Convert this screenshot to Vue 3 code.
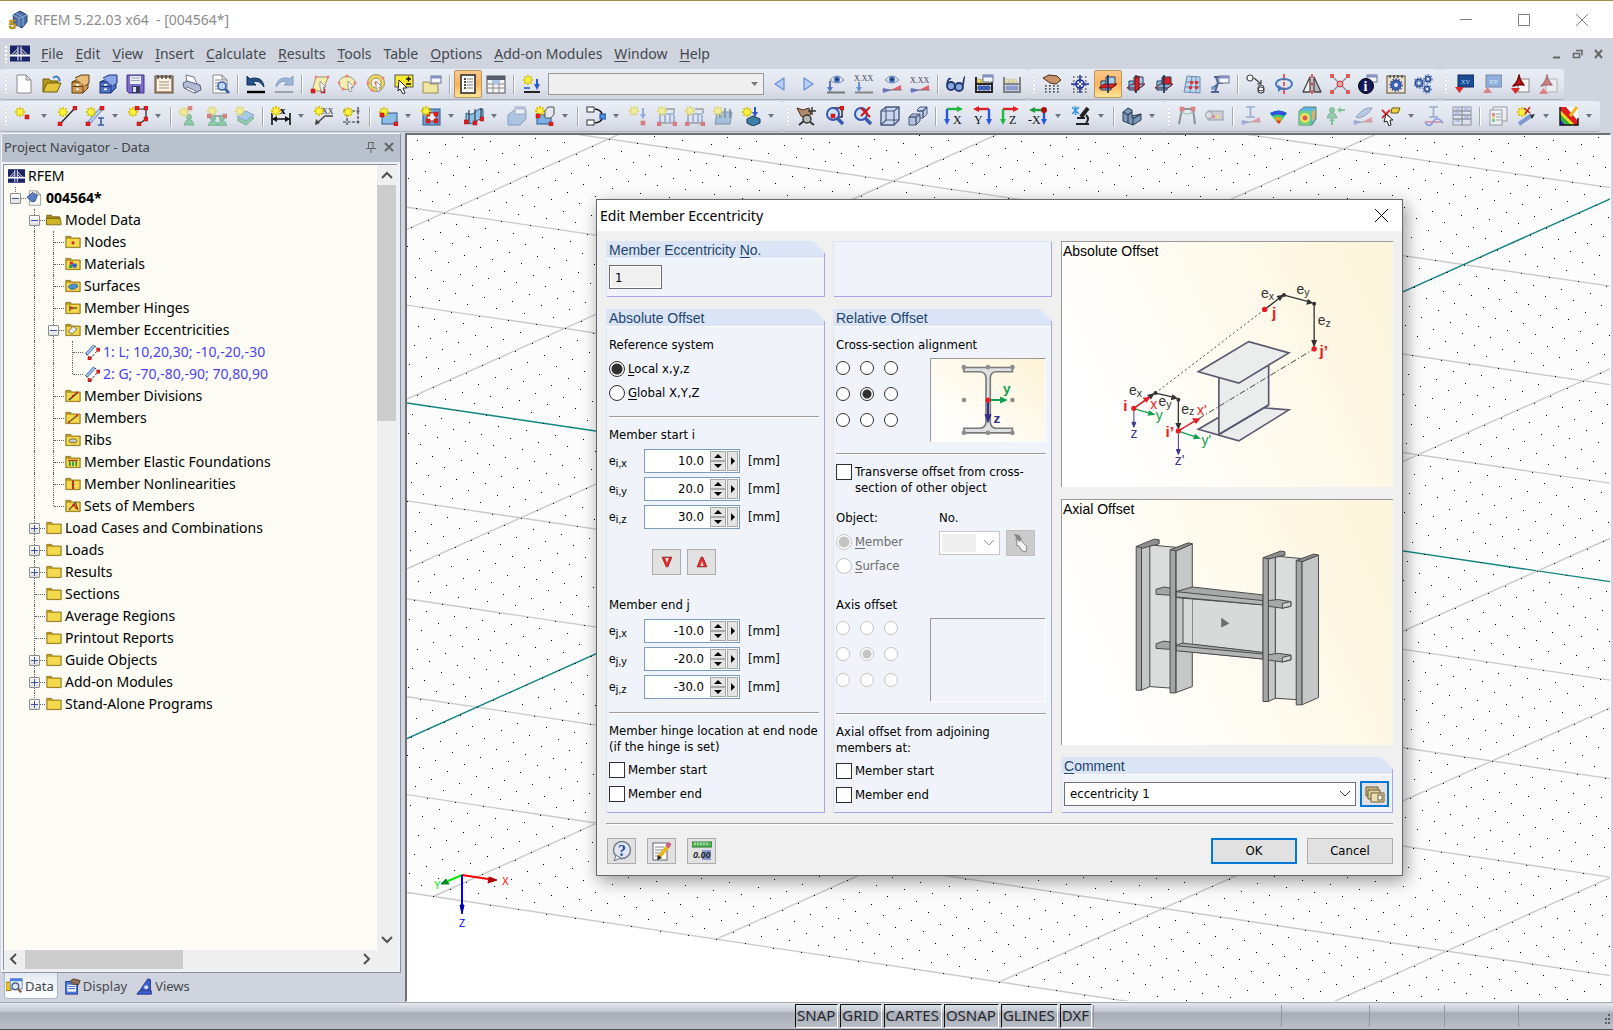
<script setup>
import { ref, computed } from 'vue'

/* ---------- icon drawing helpers (20 x 20 grid) ---------- */
const line = (d, c = '#333', w = 1.4, extra = '') => `<path d="${d}" fill="none" stroke="${c}" stroke-width="${w}" ${extra}/>`
const fill = (d, c, s = 'none', w = 1) => `<path d="${d}" fill="${c}" stroke="${s}" stroke-width="${w}" stroke-linejoin="round"/>`
const box = (x, y, w, h, c, s = 'none', sw = 1) => `<rect x="${x}" y="${y}" width="${w}" height="${h}" fill="${c}" stroke="${s}" stroke-width="${sw}"/>`
const dot = (x, y, r, c, s = 'none', sw = 1) => `<circle cx="${x}" cy="${y}" r="${r}" fill="${c}" stroke="${s}" stroke-width="${sw}"/>`
const node = (x, y) => box(x - 2, y - 2, 4, 4, '#e81c1c', '#a01010', 0.5)
const mark = (x, y) => dot(x, y, 1.5, '#f08080')
const star = (x, y) => line(`M${x - 5} ${y}h10M${x} ${y - 5}v10M${x - 3.5} ${y - 3.5}l7 7M${x + 3.5} ${y - 3.5}l-7 7`, '#d8c400', 1.8) + dot(x, y, 2.8, '#fff23c')
const soft = (s) => `<g opacity=".5">${s}</g>`
const label = (x, y, s, t, c = '#333') => `<text x="${x}" y="${y}" font-size="${s}" font-family="Liberation Serif, serif" fill="${c}">${t}</text>`
const win = (x, y) => box(x, y, 10, 7, '#f4f6fb', '#6a7390') + box(x, y, 10, 2.5, '#8591c4')
const pointer = fill('M10 7l6 6h-3l1 4-2 1-2-5z', '#f4f4f4', '#888', 0.8)

const cabinet = (a, b, c) => fill('M2 8l6-3h10v9l-5 5H2z', a, c) + fill('M2 8h11l5-3M13 8v11', 'none', c) + fill('M5 4l6-3h8v8l-4 3', b, c) + line('M3 12.500h9', c, 1) + box(6, 10, 3, 1.6, '#fff') + box(6, 14.5, 3, 1.6, '#fff')
const docPage = fill('M3 1h9l5 5v13H3z', '#fdfdfd', '#8a8a8a') + fill('M12 1v5h5z', '#ddd', '#8a8a8a')
const plane = (a, b) => fill('M3 7h10v9H3z', '#8cc0e6', '#1f3d60') + fill('M8 3h9v9H8z', a, '#1f3d60') + fill('M1 14l5-4h13l-5 4z', b, '#701010') + line('M10 1v18', '#1f3d60', 1.8)
const eye = (x, y) => fill(`M${x - 7} ${y}q7-8 14 0q-7 6-14 0z`, '#dfe9f8', '#7886a8') + dot(x, y - 0.5, 3, '#4870c0') + dot(x, y - 0.5, 1.2, '#182848')
const moment = fill('M1 19V14L10 16z', '#6474e0') + fill('M19 11v5L9 16z', '#f05864') + line('M0 16h20', '#777', 1)
const abacus = line('M2 3v16M18 3v16M1 10h18M1 18h18', '#222', 2) + [5, 9, 13].map(x => dot(x, 7, 2, '#f2e070', '#998b30', 0.6) + dot(x + 1, 14, 2.3, '#4666c8', '#203070', 0.6)).join('')
const magnify = dot(9, 8, 6, '#cfe2fa', '#3858b0', 2) + line('M13 12l6 6', '#3858b0', 3.4)
const supp = (x, y) => dot(x, y, 2.6, '#3cae60', '#1f7a3c', 0.8) + fill(`M${x - 5} ${y + 8}q1-5 5-6q4 1 5 6z`, '#46b86a', '#1f7a3c', 0.8)
const loads = line('M3 9v7M8 9v7M13 9v7M17 9v7M3 8h14', '#4a6fc0', 1.6) + line('M2 17h16', '#555', 1.4)
const axis = (c1, c2, flip, t) => flip
  ? line('M17 3H4', c1, 2.4) + fill('M7 0v6L1 3z', c1) + line('M17 3v12', c2, 2.4) + fill('M14 13h6l-3 6z', c2) + label(2, 18, 12, t, '#111')
  : line('M3 3h12', c1, 2.4) + fill('M13 0v6l6-3z', c1) + line('M3 3v12', c2, 2.4) + fill('M0 13h6l-3 6z', c2) + label(9, 18, 12, t, '#111')
const ibeam = line('M5 1h9M5 11h9M9.500 1v10', '#5070b0', 1.6)
const hand = fill('M1 4l6-3 8 1 4 4-5 4-6-1z', '#c89468', '#4a2c18')
const dots9 = [3, 7, 11, 15].map(x => [11, 14, 17].map(y => box(x, y, 1.6, 1.6, '#444')).join('')).join('')
const gear = (x, y, r, c = '#5a7fc4') => dot(x, y, r, c, '#253c78', 1) + `<circle cx="${x}" cy="${y}" r="${r + 1}" fill="none" stroke="${c}" stroke-width="1.6" stroke-dasharray="1.6 1.4"/>` + dot(x, y, r / 2.6, '#eef')
const pdf = box(8, 5, 11, 13, '#f6f6f6', '#888') + fill('M9 1q1 6 5 10q-5-1-11 1q5-4 6-11z', '#c81818', '#7a0a0a', 1.6)
const folder = (c = '') => fill('M1 5V3h6l1 2h11v12H1z', '#b8971c', '#8a6d10') + fill('M2 6h16v10H2z', '#f2d94e') + c

const icons = {
  new: docPage,
  open: fill('M1 18V5h6l2 2h7v3', '#b89a1a', '#6d5a0c') + fill('M1 18l4-9h14l-4 9z', '#e3c63c', '#6d5a0c') + line('M11 4q5-4 7 3', '#4080c0', 2),
  archive: cabinet('#d09a50', '#e8bc7a', '#5c3a10'),
  archive2: cabinet('#4f72c8', '#88a6ea', '#1c2f70'),
  save: fill('M1 1h17v18H3l-2-2z', '#7a6cc8', '#3c3486') + box(4, 2, 11, 8, '#e8ecf8') + line('M5 4h9M5 6.500h9', '#9aa', 1) + box(6, 12, 8, 7, '#333a60') + box(7, 13, 3, 5, '#dde'),
  clip: box(1, 2, 18, 17, '#b89a78', '#5c4a34') + box(3, 4, 14, 13, '#faf4e8') + line('M5 8h10M5 11h10M5 14h10', '#a08c70', 1) + line('M4 1v4M8 1v4M12 1v4M16 1v4', '#444', 1.4),
  print: fill('M4 1l8 2 3 7H5z', '#fff', '#778') + fill('M1 9l4-2 13 4 1 5-6 3-11-5z', '#b4bcd8', '#5a6286') + fill('M5 13l9 4-2 2-8-4z', '#fff', '#778'),
  preview: docPage + line('M5 6h6M5 9h8M5 12h6M5 15h6', '#888', 1) + dot(12, 12, 4, '#bcd8f4', '#4060a8', 1.6) + line('M15 15l4 4', '#4060a8', 2.6),
  undo: fill('M1 2v9h9L7 8q6-3 11 5q-1-9-9-9q-3 0-5 1z', '#24508c', '#12305c') + line('M1 18h18', '#000', 2.4),
  redo: soft(fill('M19 2v9h-9l3-3q-6-3-11 5q1-9 9-9q3 0 5 1z', '#5a86c4', '#24508c') + line('M1 18h18', '#667', 2)),
  selPara: fill('M6 3h12l-5 14H2z', '#f6eeb0', '#a09468') + mark(6, 3) + mark(18, 3) + node(3, 17) + node(13, 17) + pointer,
  selLasso: `<ellipse cx="9" cy="9" rx="8" ry="6.500" fill="#f6eeb0" stroke="#a09468"/>` + mark(1, 9) + mark(9, 2) + mark(17, 9) + mark(5, 15) + pointer,
  selRing: dot(10, 9, 8.5, '#ecd860', '#a09468') + dot(10, 9, 5, '#f3f0e0', '#a09468') + dot(10, 9, 1.5, '#e06060') + mark(2, 9) + mark(17, 4) + mark(6, 16) + pointer,
  selWin: box(1, 1, 18, 12, '#f8e830', '#555') + line('M12 5h5M14.500 2.500v5M12 10h5', '#111', 1.4) + fill('M5 6l8 8h-4l2 5-2 1-3-5-2 2z', '#fff', '#111', 0.9),
  folderWin: fill('M1 8h6l1 2h8v9H1z', '#efe6a4', '#9a8c50') + win(9, 2),
  nav: box(3, 1, 14, 18, '#fff', '#444', 1.8) + line('M6 5h2M6 8h2M6 11h2M6 14h2', '#111', 1.6) + line('M9 5h6M9 8h6M9 11h6M9 14h6', '#777', 1.2),
  table: box(1, 2, 18, 17, '#f6f6f8', '#555') + box(1, 2, 18, 4, '#555b68') + line('M1 10h18M1 14h18M7 6v13M13 6v13', '#888', 1) + box(7, 6, 6, 4, '#a9c8ee'),
  loadNew: star(6, 6) + line('M2 18h16', '#222', 2) + line('M15 5v6', '#2858d0', 2) + fill('M12 10h6l-3 6z', '#2858d0') + line('M2 14h6', '#2858d0', 1.6),
  prev: fill('M14 4v12L5 10z', '#b7d0f4', '#6a8fd0', 1.2),
  next: fill('M6 4v12l9-6z', '#b7d0f4', '#6a8fd0', 1.2),
  eyeLoad: eye(11, 6) + line('M4 7v9', '#5878c0', 2) + line('M1 18.500h18', '#777', 2) + fill('M1 13h6l-3 5z', '#5878c0'),
  xxLoad: label(0, 7, 8, 'X.XX', '#445') + line('M5 8v8', '#6a90d8', 2) + fill('M2 13h6l-3 5z', '#6a90d8') + line('M1 18.500h18', '#888', 2),
  eyeMom: eye(10, 6) + moment,
  xxMom: label(0, 9, 8, 'X.XX', '#445') + moment,
  glasses: dot(5, 12, 4, '#86a8dc', '#22386c', 1.8) + dot(13, 13, 4, '#86a8dc', '#22386c', 1.8) + line('M1 11q1-8 4-6M17 11q1-8 2-8', '#22386c', 1.8),
  abacusWin: abacus + win(9, 1),
  abacus: soft(abacus),
  handGrid: hand + dots9,
  snap: line('M3 3h14M3 7h14M3 11h14M3 15h14M3 18h14', '#555', 1.4, 'stroke-dasharray="1.5 2.5"') + dot(10, 10, 4, '#e8ecf8', '#2030a0', 1.6) + line('M10 1v18M1 10h18', '#2030a0', 1.6) + dot(10, 10, 1.2, '#fff'),
  plXY: plane('#a8d0ee', '#e02020'),
  plYZ: plane('#a8d0ee', '#7cb4e0') + fill('M9 4l4-2v12l-4 4z', '#e02020', '#701010'),
  plXZ: plane('#e02020', '#7cb4e0'),
  gridRed: fill('M5 2l13 1v16l-16-1z', '#bcd4ec', '#6a8cb0') + line('M10 2L8 18M14 3v16M4 8h14M3 13h15', '#6a8cb0', 1) + box(8, 7, 3, 3, '#e03030') + box(13, 7, 3, 3, '#e03030') + box(7, 12, 3, 3, '#e03030') + box(13, 12, 3, 3, '#e03030'),
  treeWin: line('M1 18h8M5 18l3-9M4 3h5M6 3l2 6h5M3 14l5-4', '#4c6494', 2) + win(9, 2) + dot(3, 14, 2, '#7a94c8'),
  moveCopy: dot(4, 4, 3, '#fff', '#444', 1.2) + line('M8 4l7 6M15 10v-4M15 10h-4', '#444', 1.2) + dot(15, 16, 3, '#fff', '#444', 1.2) + dot(15, 14, 3, 'none', '#444', 1),
  rotate: `<ellipse cx="10" cy="10" rx="8" ry="5" fill="none" stroke="#4a78b8" stroke-width="2"/>` + line('M10 0v20', '#e02020', 1.4, 'stroke-dasharray="4 1.5 1 1.5"') + fill('M4 11l5 3-5 4z', '#4a78b8'),
  mirror: fill('M8 3v15H1z', '#f4f4f4', '#444', 1.3) + fill('M12 3v15h7z', '#b8bcc4', '#444', 1.3) + line('M10 0v20', '#e02020', 1.4, 'stroke-dasharray="4 1.5 1 1.5"'),
  scale: line('M2 2l16 16M18 2L2 18', '#888', 1.2) + dot(10, 10, 3, '#f4a0a0', '#c03030') + [[2, 2], [18, 2], [2, 18], [18, 18]].map(p => fill(`M${p[0] - 2} ${p[1] - 2}h4v4h-4z`, '#e05858')).join(''),
  info: win(9, 1) + dot(8, 12, 7.5, '#16185c', '#000') + `<text x="5.500" y="17" font-size="14" font-weight="bold" font-family="Liberation Serif, serif" fill="#fff">i</text>`,
  gearDoc: box(1, 2, 18, 17, '#efe3cc', '#5c4a34') + line('M4 1v3M8 1v3M12 1v3M16 1v3', '#444', 1.4) + gear(10, 11, 5, '#3c62b4'),
  gears: gear(5, 9, 4) + gear(14, 5, 3) + gear(13, 15, 3),
  blDown: box(4, 1, 16, 12, '#1c4c94', '#0c2a5c') + label(7, 10, 9, 'xv', '#9cd0ff') + fill('M1 13h9l-4.500 6z', '#e02828'),
  blUp: soft(box(4, 1, 16, 12, '#3c78c4', '#0c2a5c') + label(7, 10, 9, 'xv', '#dff') + fill('M1 19h9l-4.500-6z', '#e02828')),
  pdfDown: pdf + fill('M1 14h9l-4.500 6z', '#e02828'),
  pdfUp: soft(pdf + fill('M1 20h9l-4.500-6z', '#e02828')),

  nNode: star(6, 6) + node(13, 11),
  nLine: line('M3 18L18 2', '#222', 1.2) + star(6, 6) + node(18, 2) + node(3, 18),
  nMember: line('M3 18L17 2', '#7a9cd0', 4) + line('M3 18L17 2', '#c8dcf6', 1.5) + star(6, 6) + node(17, 2) + node(3, 18) + line('M13 12h6M13 19h6M16 12v7', '#3c5ca8', 1.6),
  nPoly: line('M8 3h10v10l-7 5', '#222', 1.2) + star(5, 6) + node(9, 2) + node(18, 2) + node(18, 13) + node(11, 18),
  support: soft(supp(10, 11) + star(5, 6) + node(11, 2)),
  lineSupp: soft(line('M2 10h17', '#333', 1.4) + star(5, 5) + supp(6, 12) + supp(15, 12) + node(2, 10) + node(18, 10)),
  surfSupp: soft(fill('M2 14l9-6 8 4-8 7z', '#4cc070', '#1f7a3c') + fill('M2 11l9-6 8 4-8 6z', '#6ab0e0', '#2c6a9c') + star(5, 5)),
  dim: line('M1 7v12M19 7v12M2 13h16', '#111', 1.6) + fill('M1 13l5-3v6zM19 13l-5-3v6z', '#111') + star(5, 5) + `<text x="9" y="8" font-size="11" font-weight="bold" font-family="Liberation Serif, serif">x</text>`,
  dimXX: star(5, 5) + label(8, 8, 8, 'XX', '#333') + line('M19 10h-8L2 18', '#444', 1.4) + fill('M1 19l1-6 4 4z', '#444'),
  frame: line('M5 3v16M16 1v18M1 5h18M1 16h18', '#333', 1.2, 'stroke-dasharray="3 1.5"') + star(6, 6),
  rect: box(4, 7, 15, 11, '#8cbce8', '#2c5a8c') + star(6, 6) + node(18, 18) + node(4, 9),
  rectOpen: box(2, 3, 17, 16, '#6ea4dc', '#2c5a8c') + box(6, 7, 9, 8, '#e8f0fa', '#a02020') + node(7, 8) + node(15, 8) + node(7, 15) + node(15, 15) + star(5, 5),
  surf: fill('M2 7q6 3 9-1t8-3v10q-5 0-8 3t-9 1z', '#8cc0e8', '#2c5a8c') + line('M5 4v13M11 3v13M17 2v13', '#222', 1) + node(2, 16) + node(11, 17) + node(18, 13),
  solid: soft(fill('M1 9l6-5h12v9l-6 6H1z', '#7ca8d8', '#34609c') + win(8, 1)),
  setBox: box(2, 9, 14, 9, '#7cb0e4', '#2c5a8c') + star(5, 5) + fill('M10 5l3-4h6v7l-3 4h-6z', '#e4e8ee', '#555') + node(3, 10) + node(16, 18),
  hinge: box(1, 1, 7, 5, '#fff', '#333') + box(1, 14, 7, 5, '#fff', '#333') + line('M9 3q6 1 7 5M9 17q6-1 7-4', '#111', 1.6) + box(14, 8, 6, 5, '#4c90e0', '#1c4c94'),
  ldNode: soft(star(5, 5) + line('M14 2v8', '#4a70d0', 2) + fill('M11 8h6l-3 5z', '#4a70d0') + node(14, 17)),
  ldMem: soft(loads + line('M9 3h8v5', '#555', 1.4) + star(5, 5) + node(2, 18) + node(18, 18)),
  ldMem2: soft(loads + line('M10 3h8v5', '#555', 1.4) + star(5, 5) + node(2, 18) + node(18, 18)),
  ldSurf: soft(fill('M4 6h15l-2 12H2z', '#6ca0c8', '#24485c') + line('M7 3v9M12 2v10M17 3v9', '#24485c', 1.8) + star(5, 5)),
  ldGear: star(6, 6) + line('M14 1v7', '#2858d0', 2) + fill('M11 6h6l-3 5z', '#2858d0') + fill('M6 13l6-3 7 3v4l-7 3-6-3z', '#3c80a8', '#143850'),
  pan: fill('M1 2l6 2 6-2 2 6-4 4-6-2z', '#b08a6c', '#4a2c18') + line('M16 1v8M12 5h8', '#333', 1.4) + dot(11, 13, 4, '#b8b8b8', '#333', 1.4) + line('M3 19l5-4M14 16l4 3', '#333', 2),
  zoomWin: box(9, 2, 9, 9, 'none', '#222', 1.4) + magnify + node(18, 2) + node(9, 10),
  zoomX: magnify + line('M9 2l9 9M18 1L9 10', '#d81818', 2),
  cube: fill('M1 5l5-4h13v13l-5 5H1z', '#ccd8ee', '#48587c', 1.4) + line('M1 5h13v14M14 5l5-4M6 1v13h13M1 19l5-5', '#48587c', 1.1),
  cubes: fill('M1 11l3-3h8v7l-4 4H1z', '#b4c2e0', '#48587c') + line('M1 11h7v8M8 11l4-3', '#48587c') + fill('M9 4l3-3h7v7l-4 4h-3V8', '#c6d2ea', '#48587c') + line('M9 5h6v7M15 5l4-4', '#48587c'),
  axX: axis('#20b840', '#2858e0', false, 'X'),
  axY: axis('#e02020', '#2858e0', true, 'Y'),
  axZ: axis('#e02020', '#20b840', false, 'Z'),
  axmX: line('M14 4H4', '#20a040', 2.4) + fill('M7 1v6L1 4z', '#20a040') + line('M16 4v10', '#2858e0', 2.4) + fill('M13 13h6l-3 6z', '#2858e0') + dot(16, 4, 3, '#b01010') + label(0, 18, 12, '-X', '#111'),
  micro: line('M1 1l7 7M8 1L1 8M4.500 0v9', '#3898e8', 1.6) + line('M17 2l-7 9', '#222', 4) + line('M5 18h13M15 9q4 4 0 8M6 12h8', '#222', 2),
  block: fill('M1 6l5-4 4 2v6l9-2v6l-8 5-10-4z', '#7c98b8', '#2c3c50') + line('M1 6l5 3v8M6 9l4-3M11 13v6M10 10l1 3 8-5', '#2c3c50', 1.1),
  portal: soft(line('M2 18L5 3h11l2 15', '#444', 2) + line('M4 6q7 4 12 0', '#4aa060', 1.2) + node(5, 3) + node(16, 3)),
  roll: soft(box(3, 5, 15, 9, '#b8b8bc', '#555') + dot(4, 9, 3.5, '#d8d8dc', '#555') + box(7, 9, 3, 3, '#e03030') + box(11, 9, 3, 3, '#f0d020')),
  momI: soft(ibeam + moment),
  surfCol: fill('M1 7q9-5 17 0l-7 10q-4 0-10-10z', '#38d068') + fill('M1 7q9-5 17 0l-3 3q-6-3-12 0z', '#3050e0') + fill('M5 12q5-2 8 0l-3 5z', '#f0a030') + fill('M7 15q2-1 5 0l-2 3z', '#e82c20'),
  cubeCol: `<g opacity=".75">` + fill('M2 5l5-4h12v12l-4 6H2z', '#30a8e0', '#40604c') + fill('M2 5h12v14H2z', '#48c860') + dot(8, 12, 5, '#f0e030') + dot(8, 12, 2.4, '#e02828') + fill('M15 6l3-3v9l-3 4z', '#e0a030') + '</g>',
  suppArr: soft(supp(7, 4) + line('M20 4h-5M7 19v-6', '#20a040', 2) + fill('M16 1v6l-4-3zM4 15h6l-3-3z', '#20a040')),
  pen: soft(fill('M3 11Q12 0 19 2q-4 8-14 10z', '#8cb0e0', '#44587c') + moment),
  labels: line('M1 4l8 8M9 4l-8 8', '#d03030', 1.8) + fill('M11 2h8l-2 5h-7z', '#f0d440', '#6a5a10') + fill('M5 8l7 6h-3l1 5-2 1-2-5-3 1z', '#fff', '#111', 0.9),
  momI2: soft(ibeam + line('M1 16h18', '#d03030', 1.4) + line('M1 16q4 7 8 0t10 1', '#4058e0', 1.6)),
  tableI: soft(box(1, 1, 18, 18, '#dfe5f4', '#445') + line('M1 5h18M1 9h18M1 13h18M10 1v18', '#445', 1.3) + line('M3 3h5M12 3h5M3 7h5M12 11h5M3 15h5', '#4060c0', 1.2)),
  legend: soft(box(5, 1, 14, 14, '#f4f4f4', '#555') + box(2, 4, 12, 15, '#fff', '#555') + box(4, 7, 3, 3, '#e03030') + box(4, 10, 3, 3, '#e8d830') + box(4, 13, 3, 3, '#30b050') + line('M8 8h5M8 11h5M8 14h5', '#666', 1.2)),
  wand: star(6, 6) + line('M8 2l6 5M14 1L9 8', '#c02020', 1.4) + line('M3 18L16 9', '#7c98d0', 4) + fill('M14 9l5-1-3 5z', '#333'),
  palette: box(1, 1, 18, 18, '#fff') + fill('M1 1v18h18z', '#e8e020') + fill('M1 1h6l12 14v4h-3L1 4z', '#e02020') + fill('M1 8l11 11H8L1 13z', '#28b040') + fill('M1 13l6 6H1z', '#2040c0') + line('M11 10l7-9', '#f0b820', 3) + line('M1 1v18h18V12', '#111', 1.4),

  project: docPage + fill('M0 9l7-6 6 4-3 7-4 1z', '#5a7fc4', '#24407c'),
  folderOpen: fill('M1 16V4h6l1 2h9v3', '#a8901c', '#6d5a0c') + fill('M1 16L0 8h18l1 8z', '#d0b428', '#6d5a0c'),
  folder: folder(),
  fNode: folder(dot(10, 11, 2, '#d02020')),
  fMat: folder(box(6, 7, 4, 4, '#d03030') + dot(12, 12, 3, '#3060d0') + box(5, 11, 4, 4, '#30a050')),
  fSurf: folder(fill('M4 11q4-5 11-3l1 3q-4 4-9 3z', '#4a90d8', '#2c5a8c')),
  fHinge: folder(line('M6 7v7M6 10h9', '#6a5a10', 1.6) + dot(8, 10, 2, '#c04020')),
  fEcc: folder(fill('M4 12l6-7 5 4-6 6z', '#dfe8f4', '#6a5a10')),
  fDiv: folder(line('M5 15L15 6', '#444', 2) + dot(10, 10, 1.6, '#d02020') + dot(15, 6, 1.6, '#d02020')),
  fMem: folder(line('M5 15L15 7', '#7a6a30', 2) + dot(5, 15, 1.4, '#d02020') + dot(15, 7, 1.4, '#d02020')),
  fRib: folder(`<ellipse cx="10" cy="11" rx="5" ry="2.500" fill="#c8ccd0" stroke="#6a5a10"/>`),
  fElas: folder(line('M4 8h12', '#c03020', 1.6) + line('M6 9v6M10 9v6M14 9v6', '#1f9040', 2)),
  fNonl: folder(line('M10 6v10', '#30508c', 2) + dot(10, 7, 1.5, '#d02020') + dot(10, 11, 1.5, '#d02020') + dot(10, 15, 1.5, '#d02020')),
  fSets: folder(line('M5 15l8-9 3 9', '#555', 1.6) + dot(11, 9, 1.8, '#d02020') + dot(14, 12, 1.8, '#d02020')),
  ecc: line('M3 13L13 2', '#5a86c4', 4) + line('M3 13L13 2', '#b8d0f0', 1.6) + line('M8 18L18 7M2 12l6 6M13 2l5 5', '#222', 1.2, 'stroke-dasharray="3 1.5"') + node(7, 18) + node(18, 7),

  tabData: fill('M0 6h6v10H0z', '#e8c820', '#8a6d10') + box(5, 2, 14, 12, '#eef4fc', '#5a80c0') + box(5, 2, 14, 3, '#4a80dc') + dot(11, 11, 4, '#d8e8fa', '#4a6090', 1.6) + line('M14 14l4 4', '#8a5a30', 2.6),
  tabDisp: box(2, 4, 14, 15, '#4a78dc', '#223c80') + box(4, 8, 10, 8, '#fff') + line('M5 10h8M5 12.500h8', '#4a78dc', 1.2) + fill('M7 4l4-3 8 2-2 5-7-1z', '#8a7058', '#4a3424'),
  tabView: fill('M5 14L14 1l3 1v12z', '#3c60d0', '#1c2c80') + fill('M1 19l3-4h14v4z', '#3c60d0', '#1c2c80') + dot(12, 11, 2.4, '#cfe0ff'),

  pick: fill('M5 6l3-1 8 9-1 5-4-1-3-5-3-1 1-2z', '#f2f2f2', '#888') + fill('M3 1l5 1 3 4-3 3-3-4z', '#888'),
  down: fill('M4 4h12l-5 12H9z', '#e83030', '#900c0c') + fill('M8 5h4l-2 6z', '#fff'),
  up: fill('M4 16h12L11 4H9z', '#e83030', '#900c0c') + fill('M8 15h4l-2-6z', '#ffd8d8'),
  help: dot(10, 9, 8.500, '#dfe6f2', '#707888', 1.4) + fill('M4 14l-2 6 7-3z', '#dfe6f2', '#707888') + `<text x="6" y="15" font-size="16" font-weight="bold" font-family="Liberation Serif, serif" fill="#2a4a9c">?</text>`,
  note: box(1, 2, 14, 17, '#fdfdfd', '#667') + line('M3 6h9M3 9h9M3 12h7M3 15h6', '#889', 1) + line('M7 16L17 4', '#e8b820', 4) + line('M15 6l3-4', '#c86080', 4) + fill('M5 19l1-5 4 3z', '#222'),
  units: box(0, 1, 20, 5, '#58b858', '#28782c') + line('M3 1v3M6 1v3M9 1v3M12 1v3M15 1v3', '#fff', 0.8) + box(10, 9, 9, 10, '#8c9cd0') + `<text x="1" y="17" font-size="9" font-style="italic" font-weight="bold" font-family="Liberation Sans, sans-serif" fill="#222">0.00</text>`,
  library: fill('M1 3h12v9H1z', '#c9b98a', '#6c5c34') + fill('M3 6h12v9H3z', '#ddcf9f', '#6c5c34') + fill('M6 9h13v9H6z', '#eadfb4', '#6c5c34') + box(13, 11, 4, 5, '#fff', '#6c5c34')
}

/* ---------- toolbars ---------- */
const parse = (s) => s.split(' ').map((t) => {
  if (t === '|') return { kind: 'sep' }
  if (t === 'COMBO') return { kind: 'combo' }
  return { kind: 'btn', name: t.replace(/[>!]/g, ''), drop: t.includes('>'), on: t.includes('!') }
})
const toolRows = [
  [
    'new open archive archive2 save clip print preview | undo redo | selPara selLasso selRing selWin folderWin | nav! table | loadNew COMBO prev next eyeLoad xxLoad eyeMom xxMom | glasses abacusWin abacus',
    'handGrid snap plXY! plYZ plXZ gridRed treeWin | moveCopy rotate mirror scale info gearDoc gears',
    'blDown blUp pdfDown pdfUp'
  ],
  [
    'nNode> nLine nMember> nPoly> | support lineSupp surfSupp | dim> dimXX frame | rect> rectOpen> surf> solid setBox> | hinge> ldNode ldMem ldMem2 ldSurf ldGear>',
    'pan zoomWin zoomX cube cubes | axX axY axZ axmX> micro> | block>',
    'portal roll | momI surfCol cubeCol suppArr pen labels> momI2 tableI | legend wand> palette>'
  ]
].map(r => r.map(parse))

const menus = ['_File', '_Edit', '_View', '_Insert', '_Calculate', '_Results', '_Tools', 'Ta_ble', '_Options', '_Add-on Modules', '_Window', '_Help'].map((m) => {
  const i = m.indexOf('_')
  return [m.slice(0, i), m[i + 1], m.slice(i + 2)]
})

/* ---------- navigator tree ----------
   one guide letter per indent column:
   |  passing line      T  branch           L  last branch
   o  open node         c  closed node      z  last closed node */
const tree = [
  ['', 'logo', 'RFEM'],
  ['o', 'project', '004564*', 'bold'],
  [' o', 'folderOpen', 'Model Data'],
  [' |T', 'fNode', 'Nodes'],
  [' |T', 'fMat', 'Materials'],
  [' |T', 'fSurf', 'Surfaces'],
  [' |T', 'fHinge', 'Member Hinges'],
  [' |o', 'fEcc', 'Member Eccentricities'],
  [' ||T', 'ecc', '1: L; 10,20,30; -10,-20,-30', 'blue'],
  [' ||L', 'ecc', '2: G; -70,-80,-90; 70,80,90', 'blue'],
  [' |T', 'fDiv', 'Member Divisions'],
  [' |T', 'fMem', 'Members'],
  [' |T', 'fRib', 'Ribs'],
  [' |T', 'fElas', 'Member Elastic Foundations'],
  [' |T', 'fNonl', 'Member Nonlinearities'],
  [' |L', 'fSets', 'Sets of Members'],
  [' c', 'folder', 'Load Cases and Combinations'],
  [' c', 'folder', 'Loads'],
  [' c', 'folder', 'Results'],
  [' T', 'folder', 'Sections'],
  [' T', 'folder', 'Average Regions'],
  [' T', 'folder', 'Printout Reports'],
  [' c', 'folder', 'Guide Objects'],
  [' c', 'folder', 'Add-on Modules'],
  [' z', 'folder', 'Stand-Alone Programs']
].map(([g, icon, text, tone]) => ({
  icon, text, tone,
  guides: g.split('').map((ch, col) => ({
    up: ch !== ' ',
    down: '|Tc'.includes(ch) || (ch === 'o' && col > 0),
    twig: !' |'.includes(ch),
    sign: { o: '-', c: '+', z: '+' }[ch]
  }))
}))

/* ---------- work plane grid ---------- */
const AX = (k) => ({ y: 268 + 97.9 * k, s: 0.1485 + 0.0005 * k })
const BX = (j) => ({ y: 603.5 + 169.7 * j, s: 0.4485 })
const cross = (k, j) => {
  const a = AX(k), b = BX(j)
  const x = (b.y - a.y) / (a.s + b.s)
  return [x, a.y + a.s * x]
}
const W = 2400, H = 1600, LAST = 5
const gridA = computed(() => {
  const r = []
  for (let k = -6; k <= LAST; k++) { const a = AX(k); r.push({ k, d: `M0 ${a.y.toFixed(1)}L${W} ${(a.y + a.s * W).toFixed(1)}` }) }
  return r
})
const gridB = computed(() => {
  const r = []
  for (let j = -3; j <= 8; j++) {
    const b = BX(j), p = cross(LAST, j)
    const x = Math.max(0, p[0])
    r.push({ j, d: `M${x.toFixed(1)} ${(b.y - b.s * x).toFixed(1)}L${W} ${(b.y - b.s * W).toFixed(1)}` })
  }
  return r
})
const gridDots = computed(() => {
  let d = ''
  for (let k = -60; k <= LAST * 10; k++) {
    for (let j = -60; j <= 80; j++) {
      const [x, y] = cross(k / 10, j / 10)
      if (x > 0 && x < W && y > 0 && y < H) d += `M${Math.round(x)} ${Math.round(y)}h1v1h-1z`
    }
  }
  return d
})
const planeShape = `0,0 ${W},0 ${W},${AX(LAST).y + AX(LAST).s * W} 0,${AX(LAST).y}`

/* ---------- dialog state ---------- */
const system = ref('local')
const align = ref(4)
const start = ref([['x', '10.0'], ['y', '20.0'], ['z', '30.0']])
const end = ref([['x', '-10.0'], ['y', '-20.0'], ['z', '-30.0']])
const comment = ref('eccentricity 1')
const modes = ['SNAP', 'GRID', 'CARTES', 'OSNAP', 'GLINES', 'DXF']
</script>

<template>
  <div class="app">
    <header class="titlebar">
      <svg class="app-icon" viewBox="0 0 20 20" width="20" height="20" aria-hidden="true">
        <path d="M5 5l7-4 7 4v7l-5 6-8-4z" fill="#4c6ea6" stroke="#24406c" />
        <path d="M5 5l6 3v9M11 8l8-3M8 3l7 4v9" fill="none" stroke="#8cacdc" />
        <text x="1" y="19" font-size="13" font-weight="bold" font-family="Liberation Sans, sans-serif" fill="#f4c020" stroke="#7c5c08" stroke-width=".6">5</text>
      </svg>
      <h1>RFEM 5.22.03 x64&nbsp; - [004564*]</h1>
      <div class="win-controls">
        <button aria-label="Minimize"><svg width="12" height="12"><path d="M0 5.500h12" /></svg></button>
        <button aria-label="Maximize"><svg width="12" height="12"><path d="M.5.5h11v11H.5z" /></svg></button>
        <button aria-label="Close"><svg width="12" height="12"><path d="M0 0l12 12M12 0L0 12" /></svg></button>
      </div>
    </header>

    <nav class="menubar">
      <i class="grip"></i>
      <svg class="menu-logo" viewBox="0 0 20 16" width="20" height="17" aria-hidden="true">
        <path d="M0 0h20v16H0z" fill="#1c2468" />
        <path d="M0 10h20" stroke="#fff" stroke-width="2" />
        <path d="M8 1v14M11 1v14M8 3L2 9M8 6L5 9M11 3l6 6M11 6l3 3" stroke="#fff" fill="none" />
      </svg>
      <a v-for="m in menus" :key="m.join('')" href="#">{{ m[0] }}<u>{{ m[1] }}</u>{{ m[2] }}</a>
      <div class="mdi">
        <button aria-label="Minimize document"><svg width="12" height="12"><path d="M2 9.500h7" stroke-width="2" /></svg></button>
        <button aria-label="Restore document"><svg width="12" height="12"><path d="M1.500 5.500h6v4h-6zM4 2.500h6v5" stroke-width="1.500" /></svg></button>
        <button aria-label="Close document"><svg width="12" height="12"><path d="M2 2l7 8M9 2l-7 8" stroke-width="2" /></svg></button>
      </div>
    </nav>

    <div v-for="(row, r) in toolRows" :key="r" class="toolrow">
      <div v-for="(bar, b) in row" :key="b" class="toolbar" role="toolbar">
        <i class="grip"></i>
        <template v-for="(t, i) in bar" :key="i">
          <i v-if="t.kind === 'sep'" class="sep"></i>
          <select v-else-if="t.kind === 'combo'" class="case-combo" aria-label="Load case"><option></option></select>
          <button v-else class="tool" :class="{ on: t.on, drop: t.drop }" :aria-label="t.name">
            <svg viewBox="0 0 20 20" width="20" height="20" v-html="icons[t.name]"></svg>
            <span v-if="t.drop" class="caret"></span>
          </button>
        </template>
      </div>
    </div>

    <main class="workspace">
      <aside class="navigator">
        <div class="nav-panel">
          <div class="nav-head">
            <h2>Project Navigator - Data</h2>
            <button aria-label="Pin"><svg width="10" height="12"><path d="M2.500 1v6M7 1v6M2 1.500h6M0 7.500h10M5 8v4" /></svg></button>
            <button aria-label="Close navigator"><svg width="10" height="10"><path class="bold-x" d="M1 1l8 8M9 1L1 9" /></svg></button>
          </div>
          <div class="tree-box">
            <ul class="tree">
              <li v-for="(n, i) in tree" :key="i" :class="n.tone">
                <i v-for="(g, c) in n.guides" :key="c" class="guide" :class="{ up: g.up, down: g.down, twig: g.twig }"><b v-if="g.sign" :class="{ plus: g.sign === '+' }"></b></i>
                <svg v-if="n.icon === 'logo'" viewBox="0 0 20 16" width="17" height="14" aria-hidden="true">
                  <path d="M0 0h20v16H0z" fill="#1c2468" />
                  <path d="M0 10h20" stroke="#fff" stroke-width="2" />
                  <path d="M8 1v14M11 1v14M8 3L2 9M8 6L5 9M11 3l6 6M11 6l3 3" stroke="#fff" fill="none" />
                </svg>
                <svg v-else viewBox="0 0 20 20" width="16" height="16" aria-hidden="true" v-html="icons[n.icon]"></svg>
                <span>{{ n.text }}</span>
              </li>
            </ul>
            <div class="vbar">
              <svg width="19" height="20"><path d="M5 13l5-5 5 5" /></svg>
              <i></i>
              <svg width="19" height="20"><path d="M5 7l5 5 5-5" /></svg>
            </div>
            <div class="hbar">
              <svg width="21" height="19"><path d="M12 4l-5 5 5 5" /></svg>
              <i></i>
              <svg width="21" height="19"><path d="M8 4l5 5-5 5" /></svg>
            </div>
          </div>
        </div>
        <div class="nav-tabs">
          <button class="active"><svg viewBox="0 0 20 20" width="17" height="17" v-html="icons.tabData"></svg>Data</button>
          <button><svg viewBox="0 0 20 20" width="17" height="17" v-html="icons.tabDisp"></svg>Display</button>
          <button><svg viewBox="0 0 20 20" width="17" height="17" v-html="icons.tabView"></svg>Views</button>
        </div>
      </aside>

      <section class="viewport">
        <svg class="plane" aria-hidden="true">
          <polygon :points="planeShape" fill="#fcfcfc" />
          <path v-for="l in gridA" :key="'a' + l.k" :d="l.d" :stroke="l.k === 0 ? '#108480' : '#cacaca'" stroke-width="1.400" />
          <path v-for="l in gridB" :key="'b' + l.j" :d="l.d" :stroke="l.j === 0 ? '#108480' : '#cacaca'" stroke-width="1.400" />
          <path :d="gridDots" fill="#000" shape-rendering="crispEdges" />
          <path d="M55 740l-14 6" stroke="#00e800" stroke-width="2" />
          <path d="M34 749l5-5 3 5z" fill="#008c20" stroke="#008c20" />
          <path d="M55 740l26 4" stroke="#f00" stroke-width="2" />
          <path d="M90 745l-9 3 1-6z" fill="#b00000" stroke="#b00000" />
          <path d="M55 740v30" stroke="#00f" stroke-width="2" />
          <path d="M55 779l-2-9h4z" fill="#0000a8" stroke="#0000a8" />
          <g font-family="Liberation Sans, sans-serif" font-size="10">
            <text x="27" y="754" fill="#00e800">Y</text>
            <text x="95" y="750" fill="#f00">X</text>
            <text x="52" y="792" fill="#00f">Z</text>
          </g>
        </svg>

        <form class="dialog" role="dialog" aria-labelledby="dlg-title" @submit.prevent>
          <div class="dlg-title">
            <h2 id="dlg-title">Edit Member Eccentricity</h2>
            <button type="button" aria-label="Close dialog"><svg width="13" height="13"><path d="M0 0l13 13M13 0L0 13" /></svg></button>
          </div>

          <div class="dlg-body">
            <div class="settings">
              <section class="group">
                <h3><label for="ecc-no">Member Eccentricity <u>N</u>o.</label></h3>
                <input id="ecc-no" class="number" value="1" readonly>
              </section>
              <section class="group"></section>

              <section class="group tall">
                <h3>Absolute Offset</h3>
                <div class="group-body">
                  <p class="row">Reference system</p>
                  <label class="row"><input v-model="system" type="radio" value="local" name="system"><span><u>L</u>ocal x,y,z</span></label>
                  <label class="row"><input v-model="system" type="radio" value="global" name="system"><span><u>G</u>lobal X,Y,Z</span></label>
                  <hr>
                  <p class="row">Member start i</p>
                  <div v-for="(v, i) in start" :key="'i' + i" class="spin-row">
                    <label :for="'ei' + v[0]">e<small>i,{{ v[0] }}</small></label>
                    <span class="spin">
                      <input :id="'ei' + v[0]" v-model="v[1]" type="text">
                      <span class="updown"><button type="button" aria-label="Increase"></button><button type="button" aria-label="Decrease"></button></span>
                      <button type="button" class="more" aria-label="More"></button>
                    </span>
                    <span>[mm]</span>
                  </div>
                  <div class="copy-row">
                    <button type="button" class="tool-btn" aria-label="Copy to end"><svg viewBox="0 0 20 20" width="16" height="16" v-html="icons.down"></svg></button>
                    <button type="button" class="tool-btn" aria-label="Copy to start"><svg viewBox="0 0 20 20" width="16" height="16" v-html="icons.up"></svg></button>
                  </div>
                  <p class="row">Member end j</p>
                  <div v-for="(v, i) in end" :key="'j' + i" class="spin-row">
                    <label :for="'ej' + v[0]">e<small>j,{{ v[0] }}</small></label>
                    <span class="spin">
                      <input :id="'ej' + v[0]" v-model="v[1]" type="text">
                      <span class="updown"><button type="button" aria-label="Increase"></button><button type="button" aria-label="Decrease"></button></span>
                      <button type="button" class="more" aria-label="More"></button>
                    </span>
                    <span>[mm]</span>
                  </div>
                  <hr>
                  <p class="para">Member hinge location at end node<br>(if the hinge is set)</p>
                  <label class="row"><input type="checkbox"><span>Member start</span></label>
                  <label class="row"><input type="checkbox"><span>Member end</span></label>
                </div>
              </section>

              <section class="group tall">
                <h3>Relative Offset</h3>
                <div class="group-body">
                  <p class="row">Cross-section alignment</p>
                  <div class="align-row">
                    <div class="nine">
                      <input v-for="n in 9" :key="n" v-model="align" type="radio" :value="n - 1" name="align" :aria-label="'Alignment ' + n">
                    </div>
                    <svg class="section-pic" viewBox="1023 492 348 252">
                      <defs><linearGradient id="warm" x1="0" y1="1" x2="1" y2="0"><stop offset=".2" stop-color="#fffefb" /><stop offset="1" stop-color="#fdf3d6" /></linearGradient></defs>
                      <rect x="1023" y="492" width="348" height="252" fill="url(#warm)" />
                      <path d="M1123 518h149v13h-50q-16 0-18 18v138q2 18 18 18h50v14h-149v-14h48q18 0 20-18V549q-2-18-20-18h-48z" fill="#dfe0e2" stroke="#7a7a7a" stroke-width="5" />
                      <g fill="#8c8c8c"><circle v-for="p in [[1123, 517], [1197, 517], [1272, 517], [1123, 618], [1272, 618], [1123, 719], [1197, 719], [1272, 719]]" :key="p.join()" :cx="p[0]" :cy="p[1]" r="7" /></g>
                      <path d="M1204 618h34" stroke="#10a050" stroke-width="6" /><path d="M1234 607v22l24-11z" fill="#10a050" />
                      <path d="M1197 624v44" stroke="#302c88" stroke-width="6" /><path d="M1186 662h22l-11 28z" fill="#302c88" />
                      <circle cx="1197" cy="618" r="8" fill="#e81c24" />
                      <g font-family="Liberation Sans, sans-serif" font-weight="bold" font-size="42"><text x="1243" y="598" fill="#10a050">y</text><text x="1214" y="690" fill="#302c88">z</text></g>
                    </svg>
                  </div>
                  <hr>
                  <label class="wrap-check"><input type="checkbox"><span>Transverse offset from cross-<br>section of other object</span></label>
                  <div class="object-grid">
                    <div>
                      <p class="row">Object:</p>
                      <label class="row off"><input type="radio" name="obj" checked disabled><span><u>M</u>ember</span></label>
                      <label class="row off"><input type="radio" name="obj" disabled><span><u>S</u>urface</span></label>
                    </div>
                    <div>
                      <label class="row" for="obj-no">No.</label>
                      <div class="no-row">
                        <select id="obj-no" disabled><option></option></select>
                        <button type="button" class="tool-btn" disabled aria-label="Pick object"><svg viewBox="0 0 20 20" width="20" height="20" v-html="icons.pick"></svg></button>
                      </div>
                    </div>
                  </div>
                  <p class="row">Axis offset</p>
                  <div class="align-row">
                    <div class="nine">
                      <input v-for="n in 9" :key="n" type="radio" name="axis" disabled :checked="n === 5" :aria-label="'Axis ' + n">
                    </div>
                    <div class="section-pic"></div>
                  </div>
                  <hr>
                  <p class="para">Axial offset from adjoining<br>members at:</p>
                  <label class="row"><input type="checkbox"><span>Member start</span></label>
                  <label class="row"><input type="checkbox"><span>Member end</span></label>
                </div>
              </section>
            </div>

            <div class="pictures">
              <figure>
                <figcaption>Absolute Offset</figcaption>
                <svg viewBox="35 139 996 738">
                  <path d="M316 594L645 342" stroke="#444" stroke-width="3" stroke-dasharray="6 8" fill="none" />
                  <path d="M445 703l122-71 151 13-151 93z" fill="#ebecec" stroke="#5c5870" stroke-width="5" />
                  <path d="M507 548v171l150-89V511z" fill="#ebecec" stroke="#5c5870" stroke-width="5" />
                  <path d="M507 719l150-89" stroke="#5c5870" stroke-width="5" />
                  <path d="M445 530l152-91 121 34-151 91z" fill="#ebecec" stroke="#5c5870" stroke-width="5" />
                  <path d="M385 708L794 461" stroke="#444" stroke-width="3" stroke-dasharray="18 7 4 7" fill="none" />
                  <g stroke="#333" stroke-width="4" fill="#333">
                    <path d="M645 342l54-41M703 299l80 21M794 325v112M251 640l60-44M316 594l60 14M385 614v74" fill="none" />
                    <path d="M700 300l-9 13-7-10zM787 322l-14 3 3-11zM788 436h12l-6 16zM310 597l-8 13-8-9zM379 609l-14 4 3-12zM379 686h12l-6 14z" />
                    <circle cx="703" cy="299" r="4" /><circle cx="794" cy="325" r="4" /><circle cx="316" cy="594" r="4" /><circle cx="385" cy="614" r="4" />
                  </g>
                  <g stroke="#e81c24" stroke-width="4" fill="#e81c24">
                    <path d="M251 640l36-25M385 708l50-30" /><path d="M297 608l-8 12-8-10zM448 672l-10 12-8-12z" />
                    <circle cx="251" cy="640" r="6" /><circle cx="645" cy="342" r="6" /><circle cx="794" cy="461" r="6" /><circle cx="385" cy="708" r="6" />
                  </g>
                  <g stroke="#10a050" stroke-width="4" fill="#10a050"><path d="M258 643l38 11M392 711l42 14" /><path d="M311 658l-16 2 3-11zM448 730l-16 1 4-11z" /></g>
                  <g stroke="#3c3890" stroke-width="3" fill="#3c3890"><path d="M251 648v36M385 716v50" /><path d="M245 682h12l-6 15zM379 764h12l-6 15z" /></g>
                  <g font-family="Liberation Sans, sans-serif" font-size="42" fill="#333">
                    <text x="634" y="308">e<tspan font-size="32" dy="5">x</tspan></text>
                    <text x="741" y="297">e<tspan font-size="32" dy="5">y</tspan></text>
                    <text x="805" y="390">e<tspan font-size="32" dy="5">z</tspan></text>
                    <text x="236" y="600">e<tspan font-size="32" dy="5">x</tspan></text>
                    <text x="325" y="634">e<tspan font-size="32" dy="5">y</tspan></text>
                    <text x="394" y="656">e<tspan font-size="32" dy="5">z</tspan></text>
                    <g fill="#e81c24"><text x="300" y="642">x</text><text x="441" y="660">x'</text>
                      <g font-weight="bold" font-size="46"><text x="219" y="648">i</text><text x="346" y="727">i’</text><text x="667" y="367">j</text><text x="810" y="481">j’</text></g></g>
                    <g fill="#10a050"><text x="317" y="675">y</text><text x="455" y="752">y'</text></g>
                    <g fill="#3c3890"><text x="241" y="730">z</text><text x="374" y="812">z'</text></g>
                  </g>
                </svg>
              </figure>
              <figure>
                <figcaption>Axial Offset</figcaption>
                <svg viewBox="35 28 996 738">
                  <g stroke="#4a4a4a" stroke-width="3" stroke-linejoin="round">
                    <path d="M297 163l86 8v425l-86-6z" fill="#dbdcdc" />
                    <path d="M274 172l25-11v429l-25 11z" fill="#c6c7c7" />
                    <path d="M258 168l54-22 15 2v12l-53 14z" fill="#8e8e8e" />
                    <path d="M258 168l16 4v429h-16z" fill="#a4a5a5" />
                    <path d="M677 197l86 8v426l-86-6z" fill="#dbdcdc" />
                    <path d="M399 318l241 14v156l-241-28z" fill="#d8dada" />
                    <path d="M378 180l49-20v430l-49 18z" fill="#c6c7c7" />
                    <path d="M399 318l28 3v146l-28-5z" fill="#d8dada" stroke="none" />
                    <path d="M378 304l49-14 213 24v30l-262-22z" fill="#a8a9a9" />
                    <path d="M378 466l20-7 242 28v20l-262-26z" fill="#a8a9a9" />
                    <path d="M378 304l262 27v13l-262-24zM378 467l262 25v15l-262-25z" fill="#b4b5b5" />
                    <path d="M399 322v138" />
                    <path d="M318 297l24-7 36 6v20l-60-4zM318 461l24-8 36 6v20l-60-4z" fill="#a4a5a5" />
                    <path d="M360 178l55-21 12 3-49 22z" fill="#8e8e8e" />
                    <path d="M360 178l17 3v428h-17z" fill="#a4a5a5" />
                    <path d="M656 206l21-9v428l-21 10z" fill="#c6c7c7" />
                    <path d="M640 202l53-20 13 2v10l-50 12z" fill="#8e8e8e" />
                    <path d="M656 331l30-3 38 6v14l-26 6-42-6zM656 494l30-4 38 5v15l-26 6-42-6z" fill="#a8a9a9" />
                    <path d="M698 340l26-6v14l-26 6zM698 502l26-6v13l-26 7z" fill="#d0d0d0" />
                    <path d="M640 202l16 4v429h-16z" fill="#a4a5a5" />
                    <path d="M757 214l50-20v429l-50 22z" fill="#c6c7c7" />
                    <path d="M740 210l53-19 14 3-50 20z" fill="#8e8e8e" />
                    <path d="M740 210l17 4v431h-17z" fill="#a4a5a5" />
                  </g>
                  <path d="M514 383v29l25-12z" fill="#6c6c6c" />
                </svg>
              </figure>
              <section class="group">
                <h3><label for="comment"><u>C</u>omment</label></h3>
                <div class="comment-row">
                  <select id="comment" v-model="comment"><option>eccentricity 1</option></select>
                  <button type="button" class="tool-btn focus" aria-label="Comment library"><svg viewBox="0 0 20 20" width="20" height="20" v-html="icons.library"></svg></button>
                </div>
              </section>
            </div>
          </div>

          <hr class="foot-line">
          <div class="dlg-foot">
            <button type="button" class="tool-btn" aria-label="Help"><svg viewBox="0 0 20 20" width="20" height="20" v-html="icons.help"></svg></button>
            <button type="button" class="tool-btn" aria-label="Notes"><svg viewBox="0 0 20 20" width="20" height="20" v-html="icons.note"></svg></button>
            <button type="button" class="tool-btn" aria-label="Units"><svg viewBox="0 0 20 20" width="20" height="20" v-html="icons.units"></svg></button>
            <span class="space"></span>
            <button type="submit" class="push focus">OK</button>
            <button type="button" class="push">Cancel</button>
          </div>
        </form>
      </section>
    </main>

    <footer class="status">
      <span class="space"></span>
      <div class="modes"><button v-for="m in modes" :key="m">{{ m }}</button></div>
      <div class="cells"><i></i><i></i><i></i><i></i><i></i></div>
      <svg class="size-grip" width="8" height="12" aria-hidden="true"><path d="M5 1h2M5 5h2M2 5h2M5 9h2M2 9h2" stroke="#5c6068" stroke-width="2" /></svg>
    </footer>
  </div>
</template>

<style>
body { margin: 0; }
</style>

<style scoped>
* { box-sizing: border-box; }
.app {
  position: relative; display: flex; flex-direction: column; min-height: 100vh; overflow: hidden;
  background: #cfd4de; border-top: 1px solid #9a8a4e; border-bottom: 1px solid #4c4a52;
  font-family: "Noto Sans", "Open Sans", sans-serif; font-size: 14px; line-height: 20px; color: #000;
}
button { padding: 0; margin: 0; border: 0; background: none; font: inherit; color: inherit; }
h1, h2, h3, p, ul, figure { margin: 0; padding: 0; font-weight: normal; font-size: inherit; }
svg { display: block; flex: none; }
i { font-style: normal; }
.space { flex: 1; }

.titlebar { display: flex; align-items: center; height: 37px; padding-left: 8px; background: #fff; color: #8c8c8c; }
.titlebar h1 { margin-left: 6px; flex: 1; }
.win-controls { display: flex; padding-right: 2px; }
.win-controls button { width: 58px; height: 36px; display: grid; place-items: center; }
.win-controls path { fill: none; stroke: #808080; }

.menubar { display: flex; align-items: center; height: 31px; padding-left: 4px; color: #44484f; }
.menubar a { color: inherit; text-decoration: none; margin-right: 12px; white-space: nowrap; }
.menubar u, .dialog u { text-underline-offset: 2px; }
.menu-logo { margin: 0 11px 0 2px; }
.mdi { margin-left: auto; display: flex; gap: 9px; padding-right: 8px; }
.mdi path { fill: none; stroke: #666; }
.grip { width: 4px; height: 18px; flex: none; background: radial-gradient(circle, #fff 1px, transparent 2px) 0 0 / 4px 4px, radial-gradient(#9a9ea8 1px, transparent 2px) 0 0 / 4px 4px; }

.toolrow { display: flex; height: 32px; align-items: flex-start; }
.toolbar {
  display: flex; align-items: center; height: 31px; padding: 0 2px 0 4px; border-radius: 3px;
  background: linear-gradient(#e9edf6, #dfe4ee 60%, #cfd4de); border-bottom: 1px solid #a9aebb;
}
.toolbar .grip { margin-right: 2px; }
.tool { display: flex; align-items: center; justify-content: center; width: 28px; height: 28px; flex: none; }
.tool.drop { width: 43px; justify-content: flex-start; padding-left: 4px; gap: 7px; }
.tool.on { border: 1px solid #b59a5c; border-radius: 2px; background: linear-gradient(#fbc98c, #fbb25c 50%, #fde79a); }
.caret { border: 3px solid transparent; border-top: 4px solid #70747c; border-bottom: 0; }
.sep { width: 2px; height: 19px; margin: 0 3px; flex: none; background: #a4a8b2; border-right: 1px solid #fff; }
.case-combo {
  width: 216px; height: 22px; margin: 0 2px; flex: none; border: 1px solid #9a9a9a;
  background: url("data:image/svg+xml,%3Csvg xmlns='http://www.w3.org/2000/svg' width='7' height='4'%3E%3Cpath d='M0 0h7L3.5 4z' fill='%23777'/%3E%3C/svg%3E") right 5px center no-repeat, #efefef;
}

.workspace { flex: 1; display: flex; padding: 0 2px 0 1px; min-height: 0; }
.navigator { width: 400px; flex: none; display: flex; flex-direction: column; }
.nav-panel { flex: 1; display: flex; flex-direction: column; border: 1px solid #8c919c; border-left-color: #f4f6fa; border-top-color: #f4f6fa; background: #eef1f7; }
.nav-head { display: flex; align-items: center; gap: 8px; height: 28px; padding: 0 6px 2px 2px; background: #b9c1cd; color: #3f434a; font-size: 13px; }
.nav-head h2 { flex: 1; }
.nav-head path { fill: none; stroke: #666; stroke-width: 1; }
.nav-head .bold-x { stroke-width: 2; }
.tree-box {
  flex: 1; margin: 2px 3px 2px 1px; border: 1px solid #8c919c; border-width: 1px 0 0 1px; background: #efefef;
  display: grid; grid-template: minmax(0, 1fr) 20px / minmax(0, 1fr) 20px;
}
.tree { list-style: none; background: #fcfcf4; padding-left: 2px; border: 1px solid #fff; border-width: 0 1px 1px 0; }
.tree li { display: flex; align-items: center; height: 22px; white-space: nowrap; }
.tree li > svg { margin-left: 2px; }
.tree li > span { margin-left: 3px; }
.tree .bold { font-weight: bold; }
.tree .blue { color: #4a42f0; }
.guide { position: relative; width: 19px; height: 22px; flex: none; }
.guide.up::before { content: ""; position: absolute; left: 9px; top: 0; height: 11px; border-left: 1px dotted #666; }
.guide.down::before { height: 22px; }
.guide.twig::after { content: ""; position: absolute; left: 10px; top: 11px; width: 10px; border-top: 1px dotted #666; }
.guide b {
  position: absolute; z-index: 1; left: 4px; top: 6px; width: 11px; height: 11px; border: 1px solid #8c8c8c; border-radius: 1px;
  background: linear-gradient(#3c50a0, #3c50a0) center / 7px 1px no-repeat, linear-gradient(#fff, #e0e0e0);
}
.guide b.plus { background: linear-gradient(#3c50a0, #3c50a0) center / 7px 1px no-repeat, linear-gradient(#3c50a0, #3c50a0) center / 1px 7px no-repeat, linear-gradient(#fff, #e0e0e0); }
.vbar { display: flex; flex-direction: column; }
.vbar i { flex: 0 0 30%; width: 19px; background: #cdcdcd; }
.vbar svg:last-child { margin-top: auto; }
.vbar path, .hbar path { fill: none; stroke: #505050; stroke-width: 2; }
.hbar { display: flex; height: 19px; }
.hbar i { width: 158px; background: #cdcdcd; }
.hbar svg:last-child { margin-left: auto; }
.nav-tabs { display: flex; height: 29px; padding-left: 3px; font-size: 13px; color: #44484f; gap: 5px; }
.nav-tabs button { display: flex; align-items: center; gap: 2px; height: 26px; padding: 0 3px 0 1px; }
.nav-tabs .active { background: linear-gradient(#e4ebf2, #fff); border: 1px solid #aeb8c4; border-top: 0; border-radius: 0 0 4px 4px; }

.viewport { position: relative; flex: 1; margin-left: 4px; min-width: 0; border: 1px solid #fff; border-top: 2px solid #707070; border-left: 2px solid #707070; background: #fff; overflow: hidden; }
.plane { position: absolute; inset: 0; width: 100%; height: 100%; }

.dialog {
  position: absolute; left: 189px; top: 64px; width: 807px; padding-bottom: 11px; background: #f0f0f0; border: 1px solid #686868;
  box-shadow: 3px 5px 16px rgba(0, 0, 0, .4); font-family: "DejaVu Sans Condensed", "DejaVu Sans", sans-serif; font-size: 13px; line-height: 16px;
}
.dlg-title { display: flex; align-items: center; justify-content: space-between; height: 31px; padding: 0 14px 0 3px; background: #fff; font-family: "Noto Sans", sans-serif; font-size: 14px; }
.dlg-title path { stroke: #000; fill: none; }
.dlg-body { display: flex; gap: 9px; padding: 10px 9px 0; }
.settings { flex: 446; display: grid; grid-template-columns: 1fr 1fr; grid-template-rows: 56px auto; gap: 12px 8px; }
.pictures { flex: 332; display: flex; flex-direction: column; gap: 12px; }
.group { position: relative; background: #f0f4fa; border: 1px solid #dbe5f5; border-width: 1px 0 0 1px; }
.group::after { content: ""; position: absolute; inset: 0; pointer-events: none; border: 1px solid #a6a6ec; border-width: 0 1px 1px 0; }
.group:has(h3) { background: linear-gradient(#f0f4fa, #f0f4fa) 0 12px no-repeat; border-top: 0; }
.group:has(h3)::after { top: 12px; }
.group h3 {
  height: 18px; margin-left: -1px; padding-left: 3px; line-height: 18px; background: #dbe5f5; color: #1f456e; border-bottom: 1px solid #fff;
  font-family: "Liberation Sans", Arial, sans-serif; font-size: 14px; clip-path: polygon(0 0, calc(100% - 12px) 0, 100% 12px, 100% 100%, 0 100%);
}
.number { display: block; width: 53px; height: 24px; margin: 6px 0 0 2px; padding: 0 5px; border: 1px solid #6c6c6c; background: #f0f0f0; font: inherit; box-shadow: inset 0 0 0 1px #fff; }
.group-body { padding: 6px 6px 6px 2px; }
.row { display: flex; align-items: center; height: 24px; gap: 3px; }
.off { color: #6c6c6c; }
.group-body hr { height: 2px; margin: 11px 0 5px; border: 0; border-top: 1px solid #9a9a9a; background: #fff; }
input[type="radio"], input[type="checkbox"] { appearance: none; flex: none; width: 16px; height: 16px; margin: 0; border: 1px solid #303030; background: #fff; }
input[type="radio"] { border-radius: 50%; }
input[type="radio"]:checked { background: radial-gradient(circle, #303030 5px, #fff 6px); }
input[type="checkbox"]:checked { background: #303030; box-shadow: inset 0 0 0 3px #fff; }
input[type="radio"]:disabled { border-color: #c4c4c4; }
input[type="radio"]:disabled:checked { background: radial-gradient(circle, #c4c4c4 5px, #fff 6px); }
.spin-row { display: flex; align-items: center; height: 28px; gap: 8px; }
.spin-row > label { width: 27px; font-family: "Liberation Sans", Arial, sans-serif; font-size: 12px; }
.spin-row small { position: relative; top: 2px; font-size: 11px; }
.spin { display: flex; gap: 1px; width: 96px; height: 24px; padding: 1px; border: 1px solid #7c9cbe; background: #fff; }
.spin input { flex: 1; min-width: 0; border: 0; padding: 0 5px 0 0; text-align: right; font: inherit; background: none; }
.updown { display: flex; flex-direction: column; gap: 0; width: 16px; }
.spin button { flex: 1; display: grid; place-items: center; border: 1px solid #a8a8a8; background: #e4e4e4; }
.spin .more { flex: 0 0 11px; }
.updown button::before { content: ""; border: 4px solid transparent; border-bottom-color: #000; border-top: 0; }
.updown button + button::before { border-top: 4px solid #000; border-bottom: 0; }
.more::before { content: ""; border: 4px solid transparent; border-left-color: #000; border-right: 0; }
.copy-row { display: flex; gap: 6px; margin: 18px 0 18px 43px; }
.tool-btn { width: 29px; height: 26px; display: grid; place-items: center; border: 1px solid #adadad; background: #e1e1e1; }
.tool-btn:disabled { background: #ccc; border-color: #bfbfbf; }
.para { padding: 4px 0 3px; margin-right: -6px; white-space: nowrap; }
.align-row { display: flex; justify-content: space-between; align-items: flex-start; height: 85px; }
.nine { display: grid; grid-template-columns: repeat(3, 24px); grid-auto-rows: 26px; }
.nine input[type="radio"] { width: 14px; height: 14px; margin: 4px 0 0; }
.nine input[type="radio"]:checked { background: radial-gradient(circle, #303030 4px, #fff 5px); }
.nine input[type="radio"]:disabled:checked { background: radial-gradient(circle, #c4c4c4 4px, #fff 5px); }
.section-pic { width: 116px; height: 84px; margin-top: 1px; border: 1px solid #999; border-right-color: #fff; border-bottom-color: #fff; }
.wrap-check { display: flex; gap: 3px; padding-top: 4px; white-space: nowrap; }
.object-grid { display: grid; grid-template-columns: 103px 1fr; margin: 10px 0 15px; }
.no-row { display: flex; gap: 6px; }
select { appearance: none; border-radius: 0; font: inherit; color: #000; opacity: 1; }
.no-row select {
  width: 61px; height: 24px; margin-top: 1px; border: 1px solid #c6c6c6;
  background: linear-gradient(#efefef, #efefef) 2px 2px / 34px 18px no-repeat, url("data:image/svg+xml,%3Csvg xmlns='http://www.w3.org/2000/svg' width='10' height='6'%3E%3Cpath d='M0 0l5 5 5-5' fill='none' stroke='%23a0a0a0'/%3E%3C/svg%3E") right 5px center no-repeat, #fff;
}
figure { position: relative; height: 246px; border: 1px solid #999; border-width: 1px 0 0 1px; background: linear-gradient(65deg, #fff 15%, #fdf5dc 95%); }
figure svg { width: 100%; height: 100%; }
figcaption { position: absolute; left: 1px; top: 0; font-family: "Liberation Sans", Arial, sans-serif; font-size: 14px; line-height: 18px; }
.pictures .group { height: 56px; }
.comment-row { display: flex; align-items: center; gap: 4px; padding: 6px 4px 0 2px; }
.comment-row select {
  flex: 1; min-width: 0; height: 24px; padding: 0 5px; border: 1px solid #707070;
  background: url("data:image/svg+xml,%3Csvg xmlns='http://www.w3.org/2000/svg' width='10' height='6'%3E%3Cpath d='M0 0l5 5 5-5' fill='none' stroke='%23333'/%3E%3C/svg%3E") right 5px center no-repeat, #fff;
}
.tool-btn.focus, .push.focus { border: 2px solid #0078d7; }
.foot-line { height: 2px; margin: 10px 9px 0; border: 0; border-top: 1px solid #a0a0a0; background: #fff; }
.dlg-foot { display: flex; gap: 11px; padding: 13px 9px 0 10px; }
.push { width: 86px; height: 26px; border: 1px solid #adadad; background: #e1e1e1; }
.push + .push { margin-left: -1px; }

.status { display: flex; height: 27px; border-top: 1px solid #a4a8b2; background: linear-gradient(#e4e7ee, #c4c9d3 30%, #a9adb7 40%, #bcc0c8); font-size: 15px; color: #25282e; }
.modes { display: flex; gap: 2px; padding: 1px 1px 1px 0; }
.modes button { padding: 0 2px 4px 1px; line-height: 20px; border: 1px solid #fff; border-top: 1px solid #111; border-left: 1px solid #111; }
.cells { display: flex; width: 520px; padding: 2px 0; }
.cells i { flex: 74 0 0; border-left: 1px solid #9498a2; }
.cells i:first-child { flex-grow: 189; }
.cells i:nth-child(2) { flex-grow: 88; }
.cells i:last-child { flex-grow: 95; }
.size-grip { position: absolute; right: 2px; bottom: 3px; }
</style>
